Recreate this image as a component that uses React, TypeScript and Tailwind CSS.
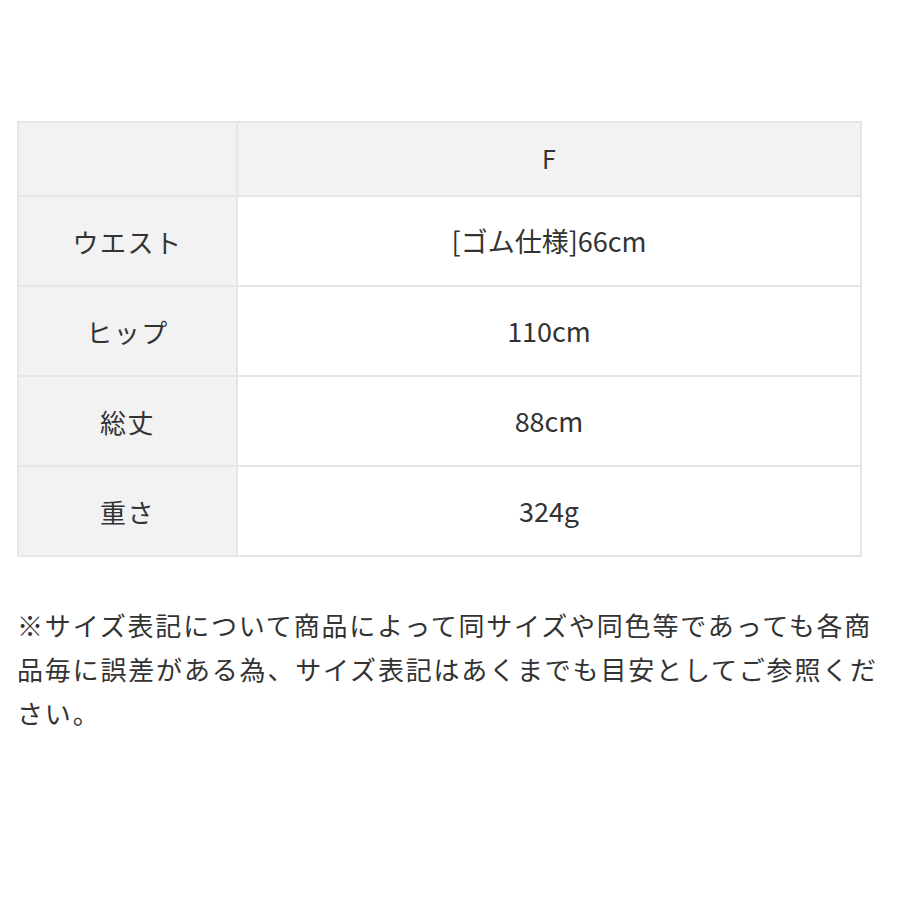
const rows: [string, string][] = [
  ["ウエスト", "[ゴム仕様]66cm"],
  ["ヒップ", "110cm"],
  ["総丈", "88cm"],
  ["重さ", "324g"],
];

export default function App() {
  return (
    <div
      className="min-h-[900px] w-[900px] bg-white pt-[121px] text-[#333]"
      style={{ fontFamily: '"Noto Sans CJK JP", "Noto Sans", sans-serif' }}
    >
      <div className="ml-[17px] w-[845px] border-2 border-[#e6e6e6]">
        <div className="grid h-[72px] grid-cols-[219px_1fr] bg-[#f2f2f2]">
          <div className="border-r-2 border-[#e6e6e6]" />
          <div className="flex items-center justify-center text-[25px]">F</div>
        </div>
        {rows.map(([label, value]) => (
          <div key={label} className="grid h-[90px] grid-cols-[219px_1fr] border-t-2 border-[#e6e6e6]">
            <div className="flex items-center justify-center border-r-2 border-[#e6e6e6] bg-[#f2f2f2] text-[26px] tracking-[0.06em]">
              {label}
            </div>
            <div className="flex items-center justify-center text-[27px]">{value}</div>
          </div>
        ))}
      </div>
      <p className="ml-[17px] mt-[46px] w-[875px] text-[26px] leading-[44px] tracking-[0.07em]">
        ※サイズ表記について商品によって同サイズや同色等であっても各商品毎に誤差がある為、サイズ表記はあくまでも目安としてご参照ください。
      </p>
    </div>
  );
}
